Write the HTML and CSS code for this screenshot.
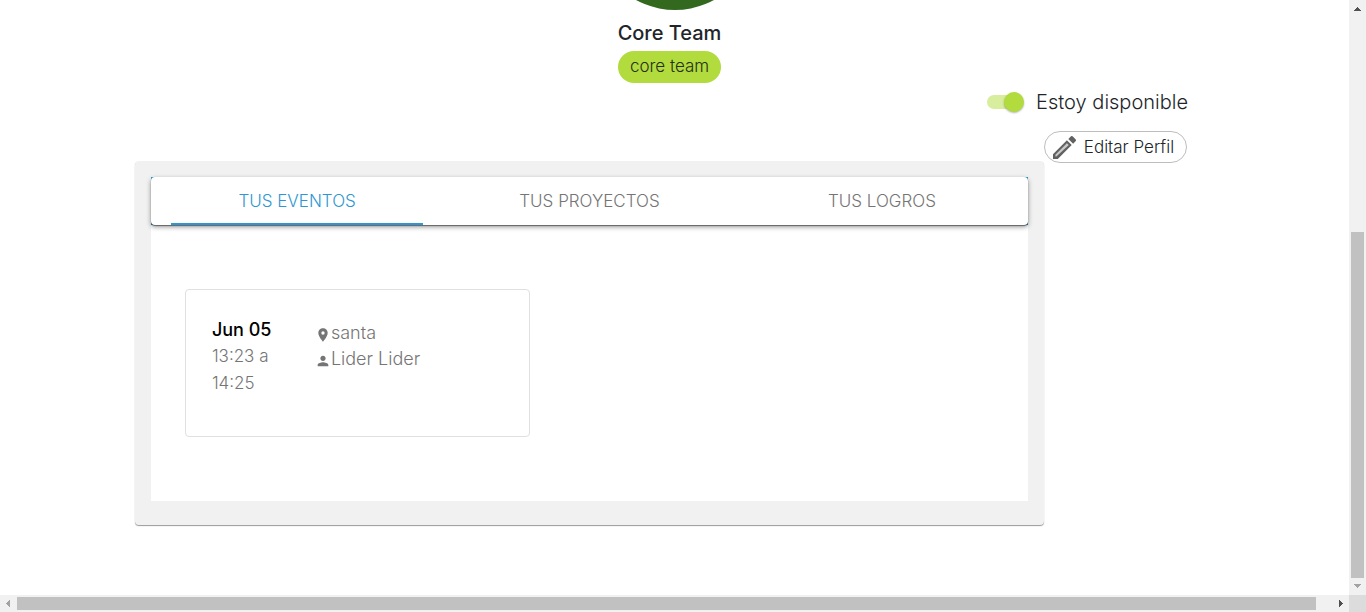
FILE: index.html
```html
<!DOCTYPE html>
<html lang="es">
<head>
<meta charset="utf-8">
<title>Perfil</title>
<link rel="stylesheet" href="styles.css">
</head>
<body>
<div class="frame">
  <main class="page">
    <header class="profile">
      <div class="avatar-clip"><div class="avatar"></div></div>
      <h1 class="name">Core Team</h1>
      <span class="chip">core team</span>
    </header>
    <div class="availability">
      <label class="switch-label">
        <input class="switch" type="checkbox" role="switch" checked>
        <span>Estoy disponible</span>
      </label>
    </div>
    <div class="content">
      <section class="panel">
        <div class="panel-body">
          <div class="tabs-wrap">
            <div class="tabs" role="tablist">
              <button class="tab tab-active" type="button" role="tab" aria-selected="true">TUS EVENTOS</button>
              <button class="tab" type="button" role="tab" aria-selected="false">TUS PROYECTOS</button>
              <button class="tab" type="button" role="tab" aria-selected="false">TUS LOGROS</button>
            </div>
          </div>
          <div class="events">
            <article class="event">
              <div class="event-when">
                <h2 class="event-date">Jun 05</h2>
                <p class="event-time">13:23 a 14:25</p>
              </div>
              <div class="event-info">
                <p class="event-line"><svg class="event-icon" viewBox="0 0 24 24" aria-hidden="true"><path d="M12 2C8.130 2 5 5.130 5 9c0 5.250 7 13 7 13s7-7.750 7-13c0-3.870-3.130-7-7-7zm0 9.500a2.500 2.500 0 1 1 0-5 2.500 2.500 0 0 1 0 5z"/></svg><span>santa</span></p>
                <p class="event-line"><svg class="event-icon" viewBox="0 0 24 24" aria-hidden="true"><path d="M12 12c2.210 0 4-1.790 4-4s-1.790-4-4-4-4 1.790-4 4 1.790 4 4 4zm0 2c-2.670 0-8 1.340-8 4v2h16v-2c0-2.660-5.330-4-8-4z"/></svg><span>Lider Lider</span></p>
              </div>
            </article>
          </div>
        </div>
      </section>
      <button class="edit" type="button">
        <svg class="edit-icon" viewBox="0 0 24 24" aria-hidden="true"><path class="edit-fill" d="M2 22v-2.500L14.500 6.500l3 3L4.500 22z"/><path class="edit-line" d="M0 24v-5L14.500 4.500l5 5L5 24H0zm2.500-2.500h1L16.500 9.500 14.500 7.500 2.500 19.500z"/><path class="edit-line" d="M16 3l2.500-2.500c.7-.7 1.500-.7 2.200 0l2.800 2.800c.7.7.7 1.500 0 2.200L21 8z"/></svg>
        <span>Editar Perfil</span>
      </button>
    </div>
  </main>
  <div class="bar-y" aria-hidden="true">
    <svg class="arrow" viewBox="0 0 17 17" shape-rendering="crispEdges"><path class="arrow-on" d="M8 7h1v1h1v1h1v1h1v1H5v-1h1V9h1V8h1z"/></svg>
    <div class="track-y"><div class="thumb-y"></div></div>
    <svg class="arrow" viewBox="0 0 17 17" shape-rendering="crispEdges"><path class="arrow-off" d="M5 6h7v1h-1v1h-1v1H9v1H8V9H7V8H6V7H5z"/></svg>
  </div>
  <div class="bar-x" aria-hidden="true">
    <svg class="arrow" viewBox="0 0 17 17" shape-rendering="crispEdges"><path class="arrow-off" d="M9 5h1v7H9v-1H8v-1H7V9H6V8h1V7h1V6h1z"/></svg>
    <div class="track-x"><div class="thumb-x"></div></div>
    <svg class="arrow" viewBox="0 0 17 17" shape-rendering="crispEdges"><path class="arrow-on" d="M7 5h1v1h1v1h1v1h1v1h-1v1H9v1H8v1H7z"/></svg>
  </div>
  <div class="corner"></div>
</div>
</body>
</html>
```

FILE: styles.css
```css
* { box-sizing: border-box; }
body { margin: 0; background: #fff; color: #212529; font-family: Inter, "Liberation Sans", sans-serif; font-weight: 300; }
h1, h2, p { margin: 0; }
button { margin: 0; padding: 0; border: 0; background: none; color: inherit; font: inherit; cursor: pointer; }

.frame { display: grid; grid-template: minmax(0, 1fr) 17px / minmax(0, 1fr) 17px; height: 100vh; }
.page { overflow: hidden; }

.profile { display: flex; flex-direction: column; align-items: center; padding-right: 10px; }
.avatar-clip { display: flex; align-items: flex-end; height: 10px; margin-left: 10px; overflow: hidden; }
.avatar { flex: none; width: 162px; height: 162px; border-radius: 50%; background: #33691e; }
.name { margin-top: 8px; font-size: 20px; line-height: 31px; font-weight: 500; }
.chip { height: 32px; margin-top: 2px; padding: 0 12px; border-radius: 16px; background: #b2db3d; color: #263018; font-size: 17px; line-height: 31px; }

.availability { display: flex; justify-content: flex-end; margin-top: 4px; padding-right: 161px; }
.switch-label { display: flex; align-items: center; gap: 12px; font-size: 20px; line-height: 30px; }
.switch { position: relative; appearance: none; width: 37px; height: 20px; margin: 0; }
.switch::before { content: ""; display: block; width: 34px; height: 14px; margin-top: 3px; border-radius: 7px; background: #d8ed9e; }
.switch::after { content: ""; position: absolute; top: 0; right: 0; width: 20px; height: 20px; border-radius: 50%; background: #b2db3d; box-shadow: 0 1px 2px rgba(0, 0, 0, .3); }

.content { display: flex; align-items: flex-start; margin-top: 14px; padding: 0 12% 0 10%; }
.panel { flex: 1; margin-top: 30px; padding: 16px 16px 24px; border-radius: 4px; background: #f1f1f1; box-shadow: 0 1px 1px rgba(0, 0, 0, .4); }
.panel-body { background: #fff; }
.tabs-wrap { background: #2196d3; }
.tabs { display: grid; grid-template-columns: repeat(3, 1fr); height: 48px; border-radius: 4px; background: #fff; box-shadow: 0 1px 1px rgba(0, 0, 0, .45), 0 2px 5px rgba(0, 0, 0, .4); }
.tab { margin: 0 20px; padding-top: 2px; border-bottom: 2px solid transparent; color: #757575; font-size: 17px; }
.tab-active { border-color: #2e97d3; color: #2e97d3; }
.events { padding: 64px 34px; }
.event { display: flex; width: 345px; min-height: 148px; padding: 26px; border: 1px solid #e0e0e0; border-radius: 4px; color: #757575; font-size: 17px; }
.event-when { width: 73px; margin-right: 30px; line-height: 27px; }
.event-date { color: #000; font-size: 18px; font-weight: 500; line-height: 27px; }
.event-info { padding-top: 4px; font-size: 18px; line-height: 26px; }
.event-line { display: flex; align-items: center; }
.event-icon { width: 16px; height: 16px; margin-top: 4px; fill: #757575; }

.edit { display: flex; align-items: center; justify-content: space-between; width: 143px; height: 32px; padding: 0 12px 0 8px; border: 1px solid #bdbdbd; border-radius: 16px; color: #212529; font-size: 17px; line-height: 30px; }
.edit-icon { width: 23px; height: 23px; }
.edit-line { fill: #616161; fill-rule: evenodd; }
.edit-fill { fill: #c8c8c8; }

.bar-y { display: flex; flex-direction: column; background: #f1f1f1; }
.bar-x { display: flex; background: #f1f1f1; }
.corner { background: #dcdcdc; }
.arrow { flex: none; width: 17px; height: 17px; }
.arrow-on { fill: #505050; }
.arrow-off { fill: #a3a3a3; }
.track-y { display: flex; flex: 1; flex-direction: column; justify-content: flex-end; padding: 0 2px; }
.thumb-y { height: 61.7%; background: #c1c1c1; }
.track-x { flex: 1; padding: 2px 0; }
.thumb-x { width: 98.8%; height: 13px; background: #c1c1c1; }
```
